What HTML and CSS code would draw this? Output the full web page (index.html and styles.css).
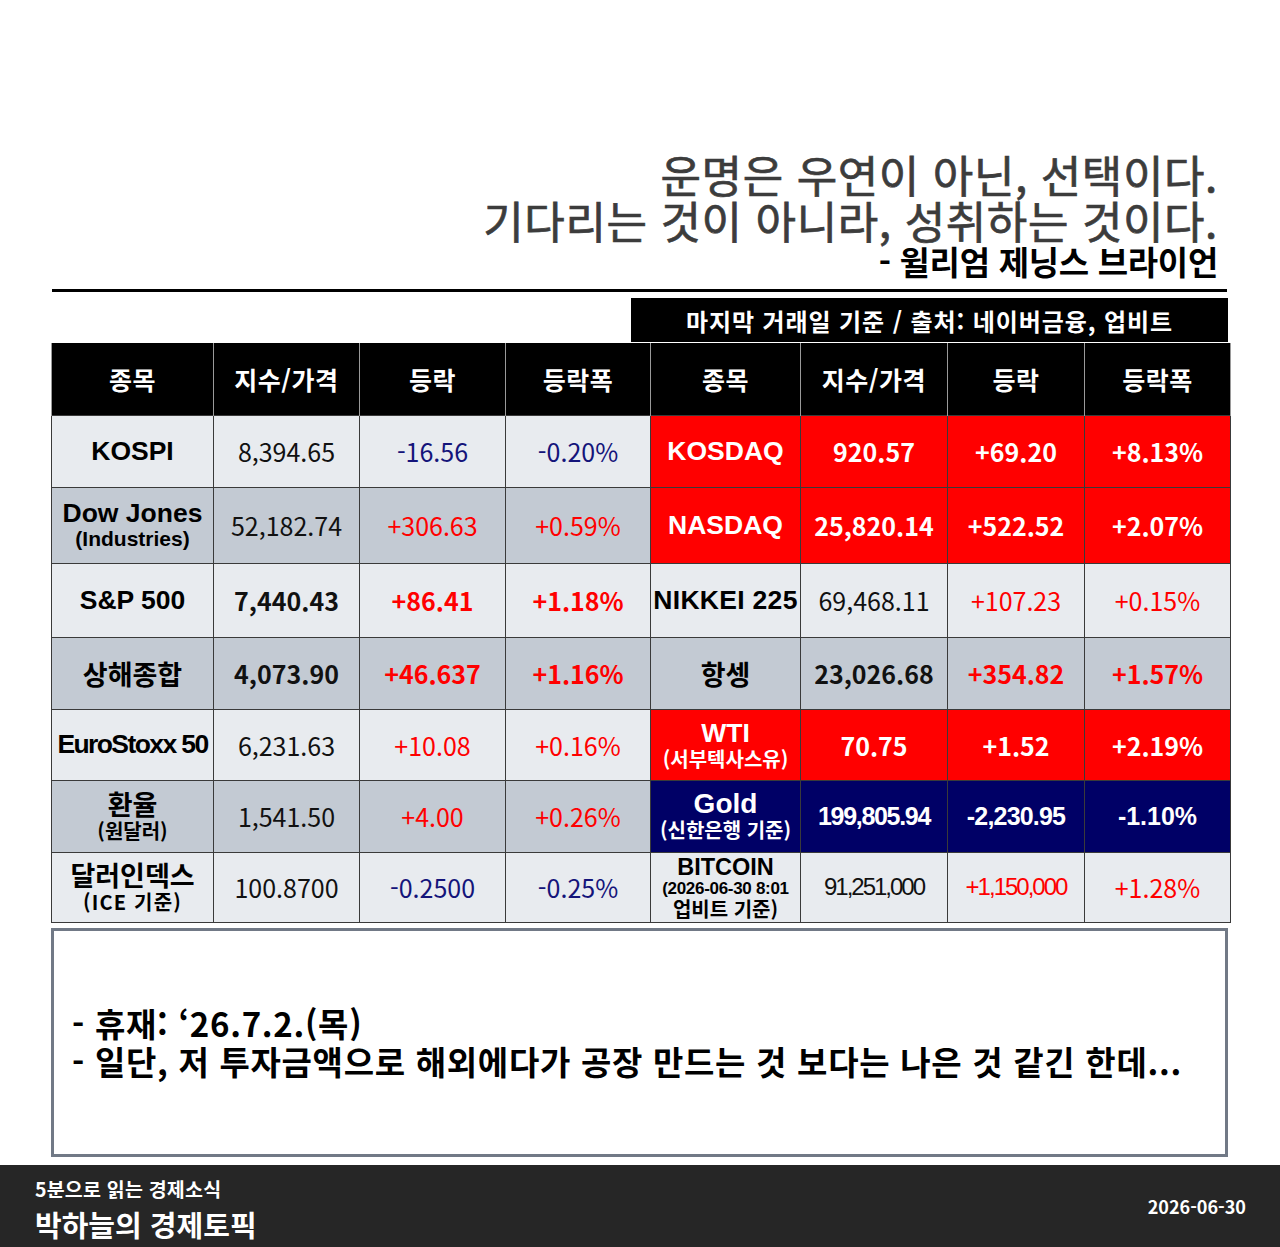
FILE: index.html
```html
<!DOCTYPE html>
<html lang="ko">
<head>
<meta charset="utf-8">
<title>박하늘의 경제토픽</title>
<link rel="stylesheet" href="styles.css">
</head>
<body>
<div class="page">
  <header class="quote">
    <p class="q-line">운명은 우연이 아닌, 선택이다.</p>
    <p class="q-line">기다리는 것이 아니라, 성취하는 것이다.</p>
    <p class="q-author">- 윌리엄 제닝스 브라이언</p>
  </header>
  <div class="rule"></div>
  <div class="source-row">
    <div class="source">마지막 거래일 기준 / 출처: 네이버금융, 업비트</div>
  </div>
  <table class="market">
    <colgroup>
      <col style="width:162px"><col style="width:146px"><col style="width:146px"><col style="width:145px">
      <col style="width:150px"><col style="width:147px"><col style="width:137px"><col style="width:146px">
    </colgroup>
    <thead>
      <tr class="h-row">
        <th>종목</th><th>지수/가격</th><th>등락</th><th>등락폭</th>
        <th>종목</th><th>지수/가격</th><th>등락</th><th>등락폭</th>
      </tr>
    </thead>
    <tbody>
      <tr class="r1">
        <td class="lt name">KOSPI</td><td class="lt num">8,394.65</td><td class="lt num dn">-16.56</td><td class="lt num dn">-0.20%</td>
        <td class="rd name">KOSDAQ</td><td class="rd num b">920.57</td><td class="rd num b">+69.20</td><td class="rd num b">+8.13%</td>
      </tr>
      <tr class="r2">
        <td class="dk name"><span class="main">Dow Jones</span><span class="sub">(Industries)</span></td><td class="dk num">52,182.74</td><td class="dk num up">+306.63</td><td class="dk num up">+0.59%</td>
        <td class="rd name">NASDAQ</td><td class="rd num b">25,820.14</td><td class="rd num b">+522.52</td><td class="rd num b">+2.07%</td>
      </tr>
      <tr class="r3">
        <td class="lt name">S&amp;P 500</td><td class="lt num b">7,440.43</td><td class="lt num b up">+86.41</td><td class="lt num b up">+1.18%</td>
        <td class="lt name nikkei">NIKKEI 225</td><td class="lt num">69,468.11</td><td class="lt num up">+107.23</td><td class="lt num up">+0.15%</td>
      </tr>
      <tr class="r4">
        <td class="dk name ko">상해종합</td><td class="dk num b">4,073.90</td><td class="dk num b up">+46.637</td><td class="dk num b up">+1.16%</td>
        <td class="dk name ko">항셍</td><td class="dk num b">23,026.68</td><td class="dk num b up">+354.82</td><td class="dk num b up">+1.57%</td>
      </tr>
      <tr class="r5">
        <td class="lt name euro">EuroStoxx 50</td><td class="lt num">6,231.63</td><td class="lt num up">+10.08</td><td class="lt num up">+0.16%</td>
        <td class="rd name"><span class="main">WTI</span><span class="sub ko-sub">(서부텍사스유)</span></td><td class="rd num b">70.75</td><td class="rd num b">+1.52</td><td class="rd num b">+2.19%</td>
      </tr>
      <tr class="r6">
        <td class="dk name"><span class="main ko">환율</span><span class="sub ko-sub">(원달러)</span></td><td class="dk num">1,541.50</td><td class="dk num up">+4.00</td><td class="dk num up">+0.26%</td>
        <td class="nv name"><span class="main gold">Gold</span><span class="sub ko-sub">(신한은행 기준)</span></td><td class="nv num arial-b tight">199,805.94</td><td class="nv num arial-b tight2">-2,230.95</td><td class="nv num arial-b">-1.10%</td>
      </tr>
      <tr class="r7">
        <td class="lt name"><span class="main ko">달러인덱스</span><span class="sub ko-sub ice">(ICE 기준)</span></td><td class="lt num">100.8700</td><td class="lt num dn">-0.2500</td><td class="lt num dn">-0.25%</td>
        <td class="lt name btc"><span class="btc-main">BITCOIN</span><span class="btc-date">(2026-06-30 8:01</span><span class="btc-src">업비트 기준)</span></td><td class="lt num arial-r">91,251,000</td><td class="lt num arial-r up">+1,150,000</td><td class="lt num up">+1.28%</td>
      </tr>
    </tbody>
  </table>
  <section class="note">
    <p class="note-line">- 휴재: ‘26.7.2.(목)</p>
    <p class="note-line">- 일단, 저 투자금액으로 해외에다가 공장 만드는 것 보다는 나은 것 같긴 한데...</p>
  </section>
  <footer class="footer">
    <div class="brand">
      <span class="brand-sub">5분으로 읽는 경제소식</span>
      <span class="brand-title">박하늘의 경제토픽</span>
    </div>
    <span class="date">2026-06-30</span>
  </footer>
</div>
</body>
</html>
```
FILE: styles.css
```css
* { box-sizing: border-box; }
html, body { margin: 0; padding: 0; background: #fff; }
body {
  width: 1280px;
  height: 1247px;
  overflow: hidden;
  font-family: "Noto Sans CJK KR", "Noto Sans", sans-serif;
  color: #000;
}
.page { display: flex; flex-direction: column; width: 1280px; height: 1247px; }

.quote {
  padding: 151px 62px 0 0;
  text-align: right;
}
.q-line {
  margin: 0;
  font-size: 44px;
  line-height: 46px;
  font-weight: 400;
  color: #3c3c3c;
  letter-spacing: 0.6px;
  -webkit-text-stroke: 0.7px #3c3c3c;
}
.q-author {
  margin: -1px 0 0;
  font-size: 33px;
  line-height: 38px;
  font-weight: 700;
  color: #000;
  letter-spacing: -0.3px;
}
.rule {
  margin: 9px 53px 0 52px;
  height: 3px;
  background: #000;
}
.source-row { display: flex; justify-content: flex-end; padding-right: 52px; margin-top: 6px; }
.source {
  width: 597px;
  height: 44px;
  background: #000;
  color: #fff;
  font-weight: 700;
  font-size: 24px;
  display: flex;
  align-items: center;
  justify-content: center;
  letter-spacing: 0.9px;
}

.market {
  margin: 1px 0 0 51px;
  width: 1179px;
  table-layout: fixed;
  border-collapse: collapse;
}
.market th {
  background: #000;
  color: #fff;
  font-weight: 700;
  font-size: 25px;
  letter-spacing: 0.5px;
  border-left: 1px solid #9a9a9a;
  border-right: 1px solid #9a9a9a;
  padding: 0;
}
.market td {
  border: 1px solid #3a3a3a;
  text-align: center;
  vertical-align: middle;
  padding: 0;
  white-space: nowrap;
}
.h-row { height: 72px; }
.r1 { height: 72px; }
.r2 { height: 76px; }
.r3 { height: 74px; }
.r4 { height: 72px; }
.r5 { height: 71px; }
.r6 { height: 72px; }
.r7 { height: 70px; }

.lt { background: #e8ebef; }
.dk { background: #c3cad3; }
.rd { background: #ff0000; color: #fff; }
.nv { background: #000066; color: #fff; }

.name {
  font-family: "Liberation Sans", Arial, sans-serif;
  font-weight: 700;
  font-size: 26.5px;
}
.name .main { display: block; line-height: 28px; }
.name .main.gold { font-size: 28px; }
.name .sub { display: block; font-size: 21px; line-height: 24px; }
.name .ko-sub { font-family: "Noto Sans CJK KR", sans-serif; font-size: 20px; }
.name .ice { letter-spacing: 1.2px; }
.ko, .name .main.ko { font-family: "Noto Sans CJK KR", sans-serif; font-size: 27px; }
.name .main.ko { line-height: 30px; }
.nikkei { letter-spacing: 0.3px; }
.euro { letter-spacing: -1.6px; }
.btc .btc-main { display: block; font-size: 23.5px; line-height: 24px; }
.btc .btc-date { display: block; font-size: 17px; line-height: 20px; letter-spacing: -0.3px; }
.btc .btc-src { display: block; font-family: "Noto Sans CJK KR", sans-serif; font-size: 20px; line-height: 20px; }

.num {
  font-family: "Noto Sans CJK KR", sans-serif;
  font-size: 25px;
  font-weight: 400;
  color: #111;
}
.rd.num, .nv.num { color: #fff; }
.num.b { font-weight: 700; }
.up { color: #ff0000; }
.dn { color: #14147a; }
.lt.num.up, .dk.num.up { color: #ff0000; }
.lt.num.dn { color: #14147a; }
.arial-b { font-family: "Liberation Sans", Arial, sans-serif; font-weight: 700; font-size: 25px; }
.tight { letter-spacing: -1.3px; }
.tight2 { letter-spacing: -0.8px; }
.arial-r { font-family: "Liberation Sans", Arial, sans-serif; font-size: 24px; letter-spacing: -2px; }

.note {
  margin: 5px 0 0 51px;
  width: 1177px;
  height: 229px;
  border: 3px solid #717986;
  display: flex;
  flex-direction: column;
  justify-content: center;
  padding: 0 0 0 18px;
}
.note-line {
  margin: 0;
  font-size: 33px;
  line-height: 38px;
  font-weight: 700;
  letter-spacing: 0.7px;
}

.footer {
  margin-top: 8px;
  flex: 1;
  background: #262626;
  color: #fff;
  display: flex;
  justify-content: space-between;
  align-items: flex-start;
  padding: 12px 34px 0 35px;
}
.brand { display: flex; flex-direction: column; }
.brand-sub { font-size: 19.5px; font-weight: 700; line-height: 24px; letter-spacing: 0.2px; }
.brand-title { font-size: 29px; font-weight: 700; line-height: 38px; margin-top: 4px; }
.date { font-size: 18px; font-weight: 700; align-self: center; margin-top: -12px; }
```
